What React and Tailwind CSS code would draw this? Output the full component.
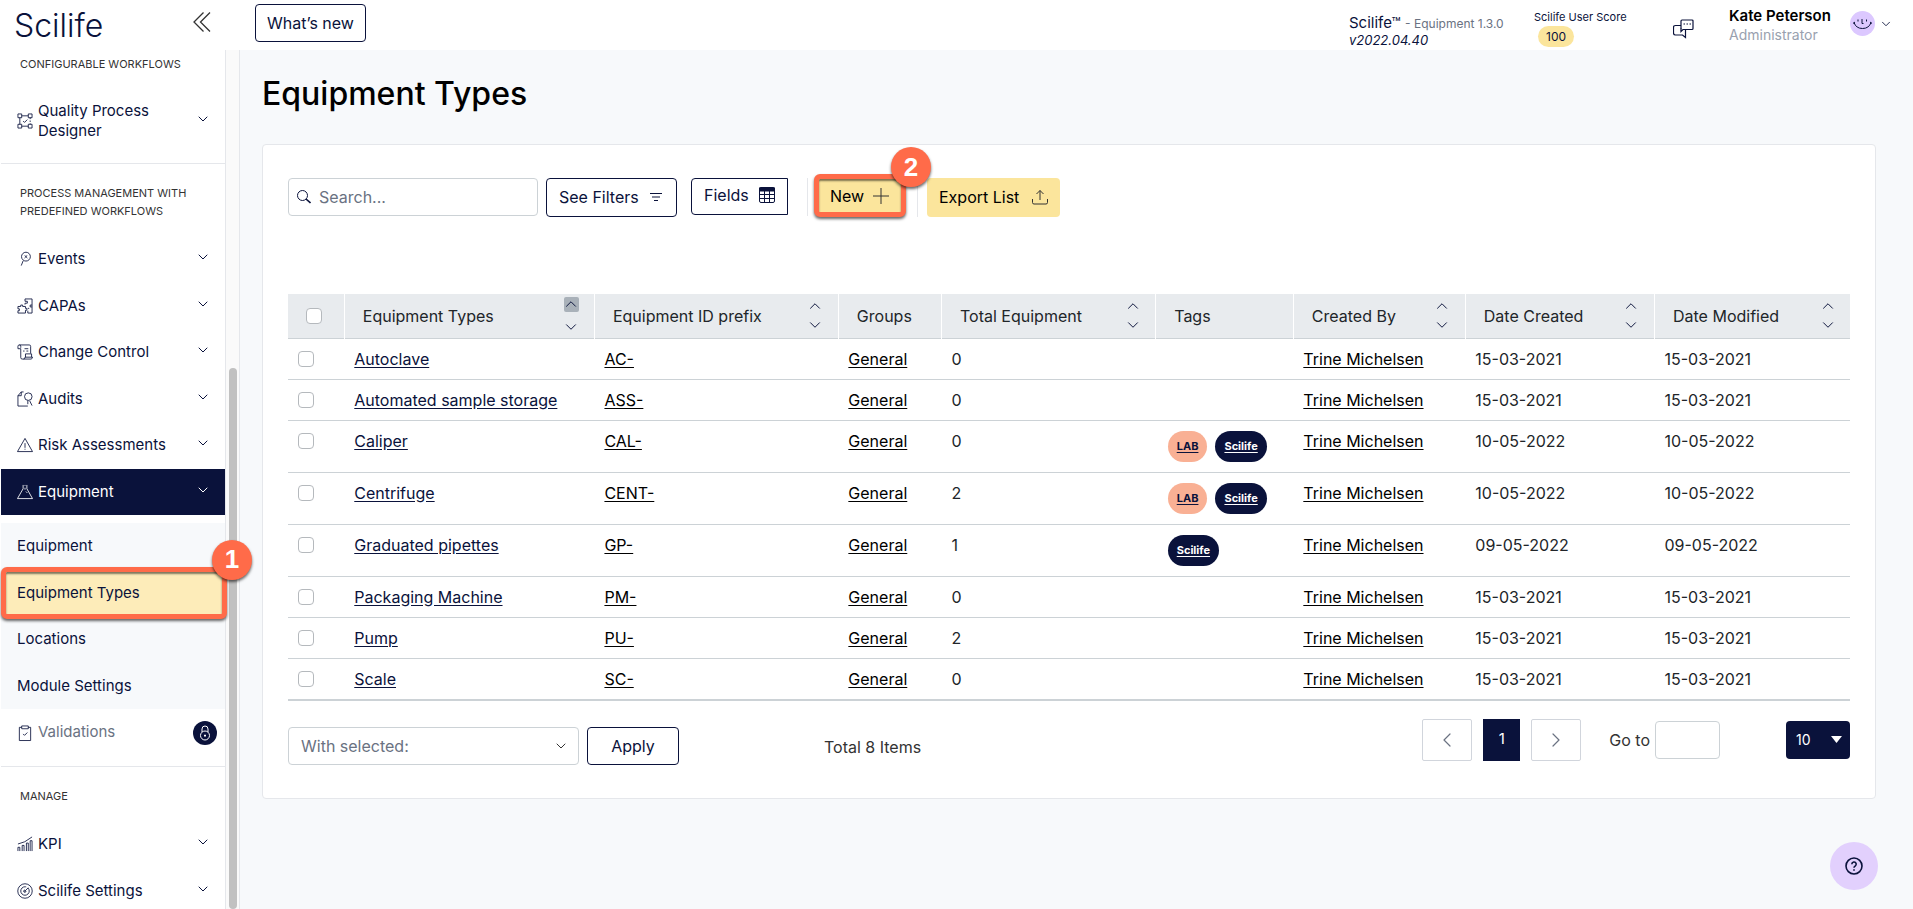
import React, { useState } from 'react';
import { FiChevronDown, FiChevronLeft, FiChevronRight, FiChevronUp } from 'react-icons/fi';

const columns = [
    { label: 'Equipment Types', sort: true, active: true, width: 'w-[16%]' },
    { label: 'Equipment ID prefix', sort: true, width: 'w-[15.6%]' },
    { label: 'Groups', width: 'w-[6.6%]' },
    { label: 'Total Equipment', sort: true, width: 'w-[13.7%]' },
    { label: 'Tags', width: 'w-[8.8%]' },
    { label: 'Created By', sort: true, width: 'w-[11%]' },
    { label: 'Date Created', sort: true, width: 'w-[12.1%]' },
    { label: 'Date Modified', sort: true, width: 'w-[12.5%]' },
];

const rows = [
    { name: 'Autoclave', prefix: 'AC-', total: 0, tags: [], date: '15-03-2021' },
    { name: 'Automated sample storage', prefix: 'ASS-', total: 0, tags: [], date: '15-03-2021' },
    { name: 'Caliper', prefix: 'CAL-', total: 0, tags: ['LAB', 'Scilife'], date: '10-05-2022' },
    { name: 'Centrifuge', prefix: 'CENT-', total: 2, tags: ['LAB', 'Scilife'], date: '10-05-2022' },
    { name: 'Graduated pipettes', prefix: 'GP-', total: 1, tags: ['Scilife'], date: '09-05-2022' },
    { name: 'Packaging Machine', prefix: 'PM-', total: 0, tags: [], date: '15-03-2021' },
    { name: 'Pump', prefix: 'PU-', total: 2, tags: [], date: '15-03-2021' },
    { name: 'Scale', prefix: 'SC-', total: 0, tags: [], date: '15-03-2021' },
];

const icons = {
    designer: (
        <>
            <path d="M1 1h4v4H1zM12 1h4v4h-4zM1 12h4v4H1zM12 12h4v4h-4zM5 3h7M5 14h7M3 5v7" />
            <path d="M14 5v7" strokeDasharray="1.5 1.5" />
            <path d="m6.5 8.5 1.5 1.5 3-3" />
        </>
    ),
    events: (
        <>
            <circle cx="9.5" cy="6" r="4.7" />
            <path d="m8 4.5 3 3M11 4.5l-3 3M6.5 10.5l-2 5" />
        </>
    ),
    capas: (
        <path d="M1 9h3V7.5h2V9h3v2h1.5v2H9v3H1v-2.5h1.5v-2H1zM8.5 1H16v15h-4.5v-2.5M8.5 1v2.5H11v2H8.5V7M16 7.5h-2v2h2M11.5 11H13" />
    ),
    change: (
        <>
            <path d="M4 4V2.5A1.5 1.5 0 0 0 1 2.5V5h3M2.5 1H13q1.5 0 1.5 1.5V10M4 5v9.5A1.5 1.5 0 0 0 5.5 16H15q1.5-.5 1.5-2H8.5q0 2-1.5 2" />
            <path d="M8 5h4M6.5 7.5H8M10 7.5h2M9 10.5V14M9 10.5h6.5V14" />
        </>
    ),
    audits: (
        <>
            <path d="M7 1H4.5L1 5v11h10.5M4.5 1v4H1" />
            <circle cx="12" cy="6" r="4" />
            <path d="M11.5 10v4M13.5 10.5l2.5 5" />
        </>
    ),
    risk: (
        <path d="M8.5 1.5 16.5 15.5H.5zM8.5 6.5v5M8.5 12.5v1" />
    ),
    flask: (
        <path d="M6.5 1v4L.5 15.5h16L10.5 5V1M8.5 1v1M8.5 4v2M9.5 8l1.5 1.5" />
    ),
    validations: (
        <>
            <path d="M5 2.5H2.5v14h12v-14H12M5 1h7v3H5z" />
            <path d="m6.5 9.5 1.5 1.5 3-3" />
        </>
    ),
    kpi: (
        <path d="M1 16v-4h2v4M5.5 16v-6h2v6M10 16V7.5h2V16M14 16V5h2v11M1 8.5Q8 7.5 16 1" />
    ),
    settings: (
        <>
            <circle cx="8.5" cy="8.5" r="7.7" />
            <circle cx="8.5" cy="8.5" r="4.5" strokeDasharray="22 2" />
            <path d="m8 9 4-4M8.5 7.5a1.2 1.2 0 1 0 1 1" />
        </>
    ),
};

function Icon({ name }) {
    return (
        <svg className="size-4 shrink-0 overflow-visible" viewBox="0 0 17 17" fill="none" stroke="currentColor" strokeWidth="0.9" aria-hidden="true">
            {icons[name]}
        </svg>
    );
}

function Step({ children }) {
    return (
        <span className="absolute -top-8 -right-[30px] z-10 flex size-10 items-center justify-center rounded-full bg-[#ff6b49] font-['Liberation_Sans'] text-[26px] font-bold text-white shadow-[0_2px_3px_rgba(0,0,0,0.6)]">
            {children}
        </span>
    );
}

function NavItem({ icon, label, active, tall }) {
    return (
        <li className={tall ? 'h-16' : 'min-h-0'}>
            <a
                href="#"
                className={`flex h-full items-center gap-[5px] pr-3.5 pl-4 text-[15px] leading-5 ${active ? 'bg-[#0a123b] text-white' : 'text-[#0a123b]'}`}
            >
                <Icon name={icon} />
                <span className="flex-1">{label}</span>
                <FiChevronDown className="mb-1 size-4" strokeWidth={1.5} />
            </a>
        </li>
    );
}

function NavHeading({ children }) {
    return <h2 className="mb-4 px-[19px] text-[11px] leading-[18px] text-[#333]">{children}</h2>;
}

function Sidebar() {
    return (
        <aside className="z-10 flex w-60 shrink-0 border-r border-gray-200 bg-white">
            <nav className="h-full flex-1 pt-[55px] pl-px">
                <section className="border-b border-gray-200 pb-2.5">
                    <NavHeading>CONFIGURABLE WORKFLOWS</NavHeading>
                    <ul>
                        <NavItem icon="designer" label="Quality Process Designer" tall />
                    </ul>
                </section>

                <section className="border-b border-gray-200 pt-5 pb-2.5">
                    <NavHeading>PROCESS MANAGEMENT WITH PREDEFINED WORKFLOWS</NavHeading>
                    <ul className="grid h-[279px] grid-rows-6">
                        <NavItem icon="events" label="Events" />
                        <NavItem icon="capas" label="CAPAs" />
                        <NavItem icon="change" label="Change Control" />
                        <NavItem icon="audits" label="Audits" />
                        <NavItem icon="risk" label="Risk Assessments" />
                        <NavItem icon="flask" label="Equipment" active />
                    </ul>
                    <ul className="mt-2 grid h-[186px] grid-rows-4 bg-[#f7f9fb] text-[15px] text-[#0a123b]">
                        <li className="flex items-center px-4"><a href="#">Equipment</a></li>
                        <li className="relative -my-[3px] -mr-0.5 flex items-center rounded-md border-[5px] border-[#ff6b49] bg-[#fdecb9] px-[11px] shadow-[0_2px_3px_rgba(0,0,0,0.6),inset_0_2px_2px_rgba(0,0,0,0.5)]">
                            <a href="#">Equipment Types</a>
                            <Step>1</Step>
                        </li>
                        <li className="flex items-center px-4"><a href="#">Locations</a></li>
                        <li className="flex items-center px-4"><a href="#">Module Settings</a></li>
                    </ul>
                    <div className="flex h-[47px] items-center gap-[5px] pr-2 pl-4 text-[15px] text-[#0a123b]">
                        <Icon name="validations" />
                        <span className="flex-1 text-gray-500">Validations</span>
                        <span className="flex size-6 items-center justify-center rounded-full bg-[#0a123b] text-white">
                            <svg className="size-4" viewBox="0 0 16 16" fill="none" stroke="currentColor" strokeWidth="1">
                                <circle cx="8" cy="10.5" r="4.5" />
                                <path d="M5 7V4a3 3 0 0 1 6 0v3M8 9.5V12M7 10.5h2" />
                            </svg>
                        </span>
                    </div>
                </section>

                <section className="pt-5">
                    <NavHeading>MANAGE</NavHeading>
                    <ul className="grid h-[93px] grid-rows-2">
                        <NavItem icon="kpi" label="KPI" />
                        <NavItem icon="settings" label="Scilife Settings" />
                    </ul>
                </section>
            </nav>
            <div className="flex h-screen w-3.5 flex-col justify-end border-l border-gray-200 bg-[#fafafa] pt-[50px] pr-0.5 pl-[3px]">
                <div className="h-[63%] rounded-full bg-[#c1c1c1]" />
            </div>
        </aside>
    );
}

function Header() {
    return (
        <header className="fixed inset-x-0 top-0 z-20 flex h-[50px] bg-white text-[#0a123b]">
            <div className="flex w-60 items-start justify-between pt-3 pr-[29px] pl-3.5">
                <a href="#" className="text-[32px] leading-7 font-light">Scilife</a>
                <button aria-label="Collapse menu">
                    <svg className="h-5 w-[18px]" viewBox="0 0 18 20" fill="none" stroke="#333" strokeWidth="1.3">
                        <path d="M10.5.5 1 10l9.5 9.5M17 .5 7.5 10l9.5 9.5" />
                    </svg>
                </button>
            </div>
            <div className="flex flex-1 items-start pr-5 pl-[15px]">
                <button className="mt-1 h-[38px] rounded border border-[#0a123b] px-[11px] text-base">What’s new</button>
                <div className="mt-3.5 ml-auto w-[185px] leading-[17px]">
                    <p className="whitespace-nowrap">
                        <span className="text-[15px]">Scilife™</span>{' '}
                        <span className="text-xs text-gray-500">- Equipment 1.3.0</span>
                    </p>
                    <p className="text-[13px] italic">v2022.04.40</p>
                </div>
                <div className="mt-2 w-[139px] text-xs">
                    <p className="text-[11px] leading-[18px]">Scilife User Score</p>
                    <span className="ml-1 inline-block h-[21px] rounded-full bg-[#fbe59c] px-2 leading-[21px]">100</span>
                </div>
                <button className="mt-[19px] mr-[35px]" aria-label="Messages">
                    <svg className="h-5 w-[21px]" viewBox="0 0 21 20" fill="none" stroke="currentColor" strokeWidth="1.2">
                        <path d="M12.5 10.5H19q1 0 1-1V2q0-1-1-1H9Q8 1 8 2v7.5M10.5 5H12M13.5 5H15M16.5 5H18" />
                        <path d="M8 6.5H2.5q-2 0-2 2V14q0 2 2 2h7l3 2.5v-8H10L8 12.5V9" />
                    </svg>
                </button>
                <div className="mt-1.5 w-[121px]">
                    <p className="text-[15px] leading-5 font-semibold text-black">Kate Peterson</p>
                    <p className="text-sm leading-[18px] text-gray-400">Administrator</p>
                </div>
                <button className="mt-[11px] flex items-center gap-1" aria-label="Account">
                    <svg className="size-[25px]" viewBox="0 0 25 25" fill="none" stroke="#0a123b" strokeWidth="1">
                        <circle cx="12.5" cy="12.5" r="12.5" fill="#dcc8ff" stroke="none" />
                        <path d="M4 11.5q2 6 8.5 6t8.5-6M3 12.5l2-1.5M20 11l2 1.5M8 8.5v2M16.5 8.5v2M12 8v4.5h1.5" />
                    </svg>
                    <FiChevronDown className="size-3.5" strokeWidth={1.5} />
                </button>
            </div>
        </header>
    );
}

function Toolbar() {
    return (
        <div className="flex items-start">
            <label className="relative block">
                <svg className="absolute top-3 left-[9px] size-3.5 text-[#0a123b]" viewBox="0 0 14 14" fill="none" stroke="currentColor">
                    <circle cx="5.5" cy="5.5" r="5" />
                    <path d="m9 9 4.5 4" strokeWidth="1.6" />
                </svg>
                <input
                    type="text"
                    aria-label="Search"
                    placeholder="Search..."
                    className="h-[38px] w-[250px] rounded border border-[#ccd2d6] pl-[30px] text-base placeholder:text-gray-500"
                />
            </label>
            <button className="ml-2 flex h-[39px] w-[131px] items-center justify-between rounded border border-[#0a123b] px-3 pb-0.5 text-[#0a123b]">
                See Filters
                <svg className="mr-0.5 h-2 w-3" viewBox="0 0 12 8" fill="none" stroke="currentColor">
                    <path d="M0 .5h12M2 4h8M4 7.5h4" />
                </svg>
            </button>
            <button className="ml-3.5 flex h-[37px] w-[97px] items-center justify-between rounded-l border border-[#0a123b] px-3 pb-1 text-[#0a123b]">
                Fields
                <svg className="size-4" viewBox="0 0 16 16" fill="none" stroke="currentColor">
                    <rect x=".5" y=".5" width="15" height="15" rx="1.5" />
                    <path d="M0 2.5h16" strokeWidth="4" />
                    <path d="M0 7.5h16M0 11.5h16M5.5 4v12M10.5 4v12" />
                </svg>
            </button>
            <div className="ml-[19px] h-[38px] w-px bg-gray-200" />
            <div className="relative -mt-1 ml-1.5 rounded-md border-[5px] border-[#ff6b49] bg-[#fbe59c] shadow-[0_2px_3px_rgba(0,0,0,0.6),inset_0_2px_2px_rgba(0,0,0,0.5)]">
                <button className="flex h-[33px] w-[82px] items-center justify-between pr-3 pl-[11px] text-black">
                    New
                    <svg className="size-4" viewBox="0 0 16 16" fill="none" stroke="#333">
                        <path d="M8 0v16M0 8h16" />
                    </svg>
                </button>
                <Step>2</Step>
            </div>
            <div className="ml-[11px] h-[39px] w-px bg-gray-200" />
            <button className="ml-[9px] flex h-[39px] w-[133px] items-center justify-between rounded bg-[#fbe59c] px-3 pb-0.5 text-black">
                Export List
                <svg className="size-4" viewBox="0 0 16 16" fill="none" stroke="#333">
                    <path d="M8 11V1.5M4.5 5 8 1.5 11.5 5M.5 10v3.5q0 1.5 1.5 1.5h12q1.5 0 1.5-1.5V10" />
                </svg>
            </button>
        </div>
    );
}

function Tag({ label }) {
    const color = label === 'LAB' ? 'bg-[#f9b094] text-[#0a123b]' : 'bg-[#0a123b] text-white';
    return (
        <a href="#" className={`inline-flex h-[31px] items-center rounded-full px-[9px] text-[11px] font-bold underline underline-offset-2 ${color}`}>
            {label}
        </a>
    );
}

function EquipmentTable() {
    const [selected, setSelected] = useState([]);

    const toggle = (name) =>
        setSelected(selected.includes(name) ? selected.filter((n) => n !== name) : [...selected, name]);

    const checkbox = 'block size-4 appearance-none rounded border border-[#b5b9bd] bg-white checked:bg-[#0a123b]';

    return (
        <table className="mt-[77px] w-full table-fixed border-collapse text-left text-base text-[#212529]">
            <thead className="bg-[#e8ebee]">
                <tr className="h-11 border-b border-[#ccd2d6]">
                    <th className="w-[3.6%] border-r border-white pl-[18px]">
                        <input
                            type="checkbox"
                            aria-label="Select all"
                            className={checkbox}
                            checked={selected.length === rows.length}
                            onChange={(e) => setSelected(e.target.checked ? rows.map((r) => r.name) : [])}
                        />
                    </th>
                    {columns.map((col) => (
                        <th key={col.label} className={`border-r border-white pl-[18px] font-normal last:border-r-0 ${col.width}`}>
                            <div className="flex items-center justify-between pr-[15px] whitespace-nowrap">
                                {col.label}
                                {col.sort && (
                                    <span className={`flex flex-col items-center text-[#0a123b] ${col.active ? 'gap-2' : 'gap-1'}`}>
                                        <button aria-label={`Sort ${col.label} ascending`} className={`flex size-[15px] items-center justify-center rounded-xs ${col.active ? 'bg-[#a9b1b9]' : ''}`}>
                                            <FiChevronUp className="size-[18px] shrink-0" strokeWidth={1.3} />
                                        </button>
                                        <button aria-label={`Sort ${col.label} descending`} className="flex size-[15px] items-center justify-center">
                                            <FiChevronDown className="size-[18px] shrink-0" strokeWidth={1.3} />
                                        </button>
                                    </span>
                                )}
                            </div>
                        </th>
                    ))}
                </tr>
            </thead>
            <tbody>
                {rows.map((row) => (
                    <tr key={row.name} className="border-b border-[#ccd2d6] align-top last:border-b-2">
                        <td className="px-2.5 py-3">
                            <input
                                type="checkbox"
                                aria-label={`Select ${row.name}`}
                                className={checkbox}
                                checked={selected.includes(row.name)}
                                onChange={() => toggle(row.name)}
                            />
                        </td>
                        <td className="px-2.5 py-2 whitespace-nowrap"><a href="#" className="text-[#0a123b] underline underline-offset-2">{row.name}</a></td>
                        <td className="px-2.5 py-2"><a href="#" className="text-black underline underline-offset-2">{row.prefix}</a></td>
                        <td className="px-2.5 py-2"><a href="#" className="text-black underline underline-offset-2">General</a></td>
                        <td className="px-2.5 py-2">{row.total}</td>
                        <td className="px-3">
                            {row.tags.length > 0 && (
                                <div className="flex gap-2 py-2.5">
                                    {row.tags.map((tag) => <Tag key={tag} label={tag} />)}
                                </div>
                            )}
                        </td>
                        <td className="px-2.5 py-2 whitespace-nowrap"><a href="#" className="text-black underline underline-offset-2">Trine Michelsen</a></td>
                        <td className="px-2.5 py-2">{row.date}</td>
                        <td className="px-2.5 py-2">{row.date}</td>
                    </tr>
                ))}
            </tbody>
        </table>
    );
}

function TableFooter() {
    return (
        <div className="mt-[18px] flex items-start text-[#333]">
            <div className="relative mt-2">
                <select aria-label="With selected" className="h-[38px] w-[291px] appearance-none rounded border border-[#ccd2d6] bg-white px-3 text-gray-500">
                    <option>With selected:</option>
                </select>
                <FiChevronDown className="pointer-events-none absolute top-[11px] right-2.5 size-4" strokeWidth={1.5} />
            </div>
            <button className="mt-2 ml-2 h-[38px] w-[92px] rounded border border-[#0a123b] text-[#0a123b]">Apply</button>
            <p className="mt-4 ml-[145px]">Total 8 Items</p>

            <div className="ml-auto flex items-center">
                <button aria-label="Previous page" className="flex h-[42px] w-[50px] items-center justify-center rounded-xs border border-gray-300 text-gray-500">
                    <FiChevronLeft className="size-6" strokeWidth={1.2} />
                </button>
                <button className="ml-[11px] h-[42px] w-[37px] bg-[#0a123b] text-[15px] text-white">1</button>
                <button aria-label="Next page" className="ml-[11px] flex h-[42px] w-[50px] items-center justify-center rounded-xs border border-gray-300 text-gray-500">
                    <FiChevronRight className="size-6" strokeWidth={1.2} />
                </button>
                <label htmlFor="goto" className="ml-7">Go to</label>
                <input id="goto" type="text" className="ml-[5px] h-[38px] w-[65px] rounded border border-[#ccd2d6]" />
                <div className="relative ml-[66px]">
                    <select aria-label="Items per page" className="block h-[38px] w-16 appearance-none rounded bg-[#0a123b] px-2.5 text-sm text-white">
                        <option>10</option>
                        <option>25</option>
                    </select>
                    <svg className="pointer-events-none absolute top-[15px] right-2 h-[7px] w-[11px] fill-white" viewBox="0 0 11 7">
                        <path d="M0 0h11L5.5 7z" />
                    </svg>
                </div>
            </div>
        </div>
    );
}

export default function App() {
    return (
        <div className="flex h-screen overflow-hidden bg-[#f7f9fb] font-[Inter,sans-serif] text-base">
            <Header />
            <Sidebar />
            <main className="flex-1 pt-[50px] pr-[37px] pl-[22px]">
                <h1 className="mt-5 text-[32px] leading-[48px] font-medium text-black">Equipment Types</h1>
                <div className="mt-[26px] rounded border border-gray-200 bg-white px-[25px] py-[33px]">
                    <Toolbar />
                    <EquipmentTable />
                    <TableFooter />
                </div>
            </main>
            <button aria-label="Help" className="fixed right-[35px] bottom-[19px] flex size-12 items-center justify-center rounded-full bg-[#e2d0fd] text-[#0a123b]">
                <svg className="size-[18px]" viewBox="0 0 18 18" fill="none" stroke="currentColor" strokeWidth="1.6">
                    <circle cx="9" cy="9" r="8" />
                    <path d="M6.8 7.2a2.2 2.2 0 1 1 3.2 2q-1 .5-1 1.5M9 12.2v1.6" />
                </svg>
            </button>
        </div>
    );
}
